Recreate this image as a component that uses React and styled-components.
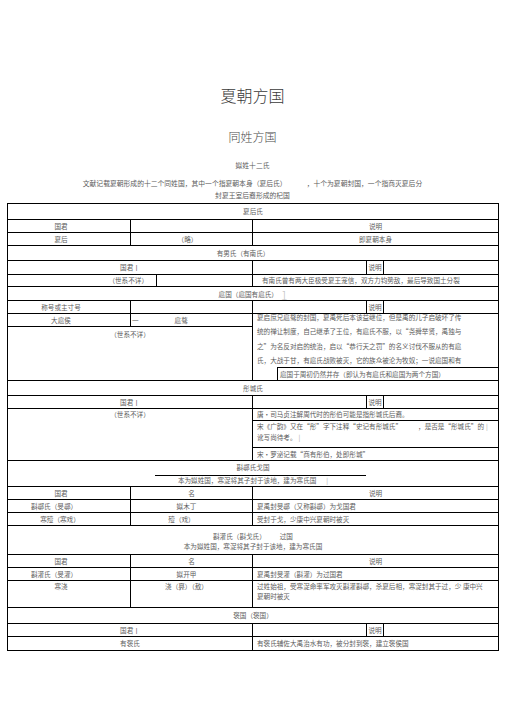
import React from "react";
import styled, { createGlobalStyle } from "styled-components";

const GlobalStyle = createGlobalStyle`
  html, body {
    margin: 0;
    padding: 0;
    background: #fff;
  }
  body {
    font-family: "Noto Sans CJK SC", "Noto Sans", sans-serif;
    color: #5c5c5c;
  }
`;

const Page = styled.div`
  width: 505px;
  min-height: 714px;
  padding-top: 85px;
  box-sizing: border-box;
`;

const Title = styled.h1`
  margin: 0;
  text-align: center;
  font-size: 16px;
  line-height: 20px;
  font-weight: 300;
  color: #3a3a3a;
`;

const Subtitle = styled.h2`
  margin: 24px 0 0;
  text-align: center;
  font-size: 12px;
  line-height: 16px;
  font-weight: 300;
  color: #4a4a4a;
`;

const Caption = styled.div`
  margin-top: ${(p) => p.$mt}px;
  text-align: center;
  font-size: 6.8px;
  line-height: 10px;
  color: #5c5c5c;
  white-space: nowrap;
`;

const Gap = styled.span`
  display: inline-block;
  width: ${(p) => p.$w}px;
`;

const Table = styled.div`
  margin: 3px 0 0 7px;
  width: 492px;
  border: 1px solid #000;
  box-sizing: border-box;
  font-size: 6.6px;
  color: #5c5c5c;
`;

const Row = styled.div`
  display: flex;
  height: ${(p) => p.$h}px;
  box-sizing: border-box;
  flex: none;
  & + & {
    border-top: 1px solid #000;
  }
`;

const Cell = styled.div`
  box-sizing: border-box;
  ${(p) => (p.$w ? `width: ${p.$w}px; flex: none;` : `flex: 1; min-width: 0;`)}
  display: flex;
  align-items: ${(p) => (p.$top ? "flex-start" : "center")};
  justify-content: ${(p) => p.$align || "center"};
  padding: ${(p) => p.$pt || 0}px ${(p) => p.$pr || 0}px 0 ${(p) => p.$pl || 0}px;
  line-height: ${(p) => p.$lh || 9}px;
  white-space: nowrap;
  & + & {
    border-left: 1px solid #000;
  }
`;

const Col = styled.div`
  box-sizing: border-box;
  display: flex;
  flex-direction: column;
  ${(p) => (p.$w ? `width: ${p.$w}px; flex: none;` : `flex: 1; min-width: 0;`)}
  & + & {
    border-left: 1px solid #000;
  }
`;

const Pane = styled.div`
  box-sizing: border-box;
  ${(p) => (p.$h ? `height: ${p.$h}px; flex: none;` : `flex: 1;`)}
  padding: ${(p) => p.$pt || 0}px 0 0 ${(p) => p.$pl || 0}px;
  text-align: ${(p) => p.$align || "left"};
  line-height: ${(p) => p.$lh || 9}px;
  white-space: nowrap;
  overflow: hidden;
  border-top: ${(p) => (p.$rule ? "1px solid #000" : "none")};
`;

const ParaLine = styled.div`
  height: ${(p) => p.$h}px;
  flex: none;
  padding-left: 4px;
  line-height: 7px;
  white-space: nowrap;
`;

const BoxedLine = styled.div`
  flex: 1;
  margin-left: 24px;
  border-top: 1px solid #000;
  border-left: 1px solid #000;
  display: flex;
  align-items: center;
  padding-left: 2px;
  white-space: nowrap;
`;

const HeadCell = styled.div`
  flex: 1;
  display: flex;
  flex-direction: column;
  align-items: center;
  padding-top: ${(p) => p.$pt}px;
  white-space: nowrap;
`;

const HeadLine = styled.div`
  line-height: ${(p) => p.$lh}px;
`;

const Rule = styled.div`
  align-self: flex-start;
  margin: 3px 0 0 147px;
  width: 211px;
  border-top: 1px solid #000;
`;

const Note = styled.span`
  margin-left: 3px;
  font-size: 12px;
  line-height: 10px;
  font-weight: 300;
  color: #c4c4c4;
  align-self: flex-end;
`;

const Faint = styled.span`
  color: #aaa;
  margin-left: 2px;
`;

const ShuoMingRow = ({ left, h = 13, split }) => (
  <Row $h={h}>
    {split ? (
      <>
        <Cell $w={122} $pr={16}>{left}</Cell>
        <Cell $w={122} />
      </>
    ) : (
      <Cell $w={244}>{left}</Cell>
    )}
    <Cell $w={114} />
    <Cell $w={17}>说明</Cell>
    <Cell />
  </Row>
);

export default function App() {
  return (
    <Page>
      <GlobalStyle />
      <Title>夏朝方国</Title>
      <Subtitle>同姓方国</Subtitle>
      <Caption $mt={15}>姒姓十二氏</Caption>
      <Caption $mt={8}>
        文献记载夏朝形成的十二个同姓国，其中一个指夏朝本身（夏后氏）
        <Gap $w={20} />
        ，十个为夏朝封国，一个指商灭夏后分
      </Caption>
      <Caption $mt={2}>封夏王室后裔形成的杞国</Caption>

      <Table>
        <Row $h={15}>
          <Cell>夏后氏</Cell>
        </Row>
        <Row $h={13}>
          <Cell $w={122} $pr={16}>国君</Cell>
          <Cell $w={122} />
          <Cell>说明</Cell>
        </Row>
        <Row $h={13}>
          <Cell $w={122} $pr={16}>夏后</Cell>
          <Cell $w={122} $pr={8}>（略）</Cell>
          <Cell>即夏朝本身</Cell>
        </Row>
        <Row $h={15}>
          <Cell $pr={20}>有男氏（有南氏）</Cell>
        </Row>
        <ShuoMingRow h={14} left="国君丨" />
        <Row $h={12}>
          <Cell $w={148} $align="flex-end" $pr={8}>（世系不详）</Cell>
          <Cell $w={96} />
          <Cell $align="flex-start" $pl={9}>
            有南氏曾有两大臣极受夏王宠信，双方力钧势敌，最后导致国土分裂
          </Cell>
        </Row>
        <Row $h={14}>
          <Cell $pt={2}>
            扈国（扈国有扈氏）<Note>1</Note>
          </Cell>
        </Row>
        <ShuoMingRow split left="称号或主寸号" />
        <Row $h={67}>
          <Col $w={244}>
            <Row $h={12}>
              <Cell $w={122} $pr={16}>大扈侯</Cell>
              <Cell $w={122} $align="flex-start" $pl={1}>
                一<Gap $w={36} />扈骜
              </Cell>
            </Row>
            <Pane $rule $align="center" $pt={3}>（世系不详）</Pane>
          </Col>
          <Col>
            <ParaLine $h={14.4}>
              夏启庶兄扈骜的封国，夏禹死后本该益继位，但是禹的儿子启破坏了传
            </ParaLine>
            <ParaLine $h={14.4}>
              统的禅让制度，自己继承了王位，有扈氏不服，以“尧舜举贤，禹独与
            </ParaLine>
            <ParaLine $h={14.4}>
              之”为名反对启的统治，启以“恭行天之罚”的名义讨伐不服从的有扈
            </ParaLine>
            <ParaLine $h={9.4}>
              氏，大战于甘，有扈氏战败被灭，它的族众被沦为牧奴；一说扈国和有
            </ParaLine>
            <BoxedLine>扈国于周初仍然并存（即认为有扈氏和扈国为两个方国）</BoxedLine>
          </Col>
        </Row>
        <Row $h={15}>
          <Cell>彤城氏</Cell>
        </Row>
        <ShuoMingRow left="国君丨" />
        <Row $h={52}>
          <Col $w={244}>
            <Pane $align="center" $pt={1}>（世系不详）</Pane>
          </Col>
          <Col>
            <Pane $h={11} $pl={4} $lh={11}>
              唐·司马贞注解周代时的彤伯可能是指彤城氏后裔。
            </Pane>
            <Pane $h={27} $rule $pl={4} $lh={11}>
              宋《广韵》又在“彤”字下注释“史记有彤城氏”
              <Gap $w={16} />
              ，是否是“彤城氏”的<Faint>|</Faint>
              <br />
              讹写尚待考。<Faint>|</Faint>
            </Pane>
            <Pane $rule $pl={4} $lh={12}>
              宋·罗泌记载“商有彤伯，处即彤城”
            </Pane>
          </Col>
        </Row>
        <Row $h={26}>
          <HeadCell $pt={1}>
            <HeadLine $lh={10}>斟鄩氏戈国</HeadLine>
            <Rule />
            <HeadLine $lh={8}>
              本为姒姓国，寒浞将其子封于该地，建为寒氏国<Gap $w={8} />
              <Faint>|</Faint>
            </HeadLine>
          </HeadCell>
        </Row>
        <Row $h={13}>
          <Cell $w={122} $pr={16}>国君</Cell>
          <Cell $w={122}>名</Cell>
          <Cell>说明</Cell>
        </Row>
        <Row $h={13}>
          <Cell $w={122} $pr={30}>斟鄩氏（旻鄩）</Cell>
          <Cell $w={122} $pr={10}>姒木丁</Cell>
          <Cell $align="flex-start" $pl={4}>夏禹封旻鄩（又称斟鄩）为戈国君</Cell>
        </Row>
        <Row $h={13}>
          <Cell $w={122} $pr={18}>寒殪（寒戏）</Cell>
          <Cell $w={122} $pr={20}>殪（戏）</Cell>
          <Cell $align="flex-start" $pl={4}>受封于戈，少康中兴夏朝时被灭</Cell>
        </Row>
        <Row $h={29}>
          <HeadCell $pt={5}>
            <HeadLine $lh={10}>
              斟灌氏（斟戈氏）<Gap $w={14} />过国
            </HeadLine>
            <HeadLine $lh={10}>本为姒姓国，寒浞将其子封于该地，建为寒氏国</HeadLine>
          </HeadCell>
        </Row>
        <Row $h={13}>
          <Cell $w={122} $pr={16}>国君</Cell>
          <Cell $w={122}>名</Cell>
          <Cell>说明</Cell>
        </Row>
        <Row $h={13}>
          <Cell $w={122} $pr={30}>斟灌氏（旻灌）</Cell>
          <Cell $w={122} $pr={10}>姒开甲</Cell>
          <Cell $align="flex-start" $pl={4}>夏禹封旻灌（斟灌）为过国君</Cell>
        </Row>
        <Row $h={27}>
          <Cell $w={122} $pr={16} $top $lh={10}>寒浇</Cell>
          <Cell $w={122} $pr={10} $top $lh={10}>浇（奡）（敖）</Cell>
          <Cell $align="flex-start" $pl={4} $top $lh={10}>
            <div>
              过姓始祖，受寒浞命率军攻灭斟灌斟鄩，杀夏后相，寒浞封其于过，少 康中兴
              <br />
              夏朝时被灭
            </div>
          </Cell>
        </Row>
        <Row $h={16}>
          <Cell>褒国（褒国）</Cell>
        </Row>
        <ShuoMingRow left="国君丨" />
        <Row $h={14}>
          <Cell $w={244}>有褒氏</Cell>
          <Cell $align="flex-start" $pl={4}>有褒氏辅佐大禹治水有功，被分封到褒，建立褒侯国</Cell>
        </Row>
      </Table>
    </Page>
  );
}
